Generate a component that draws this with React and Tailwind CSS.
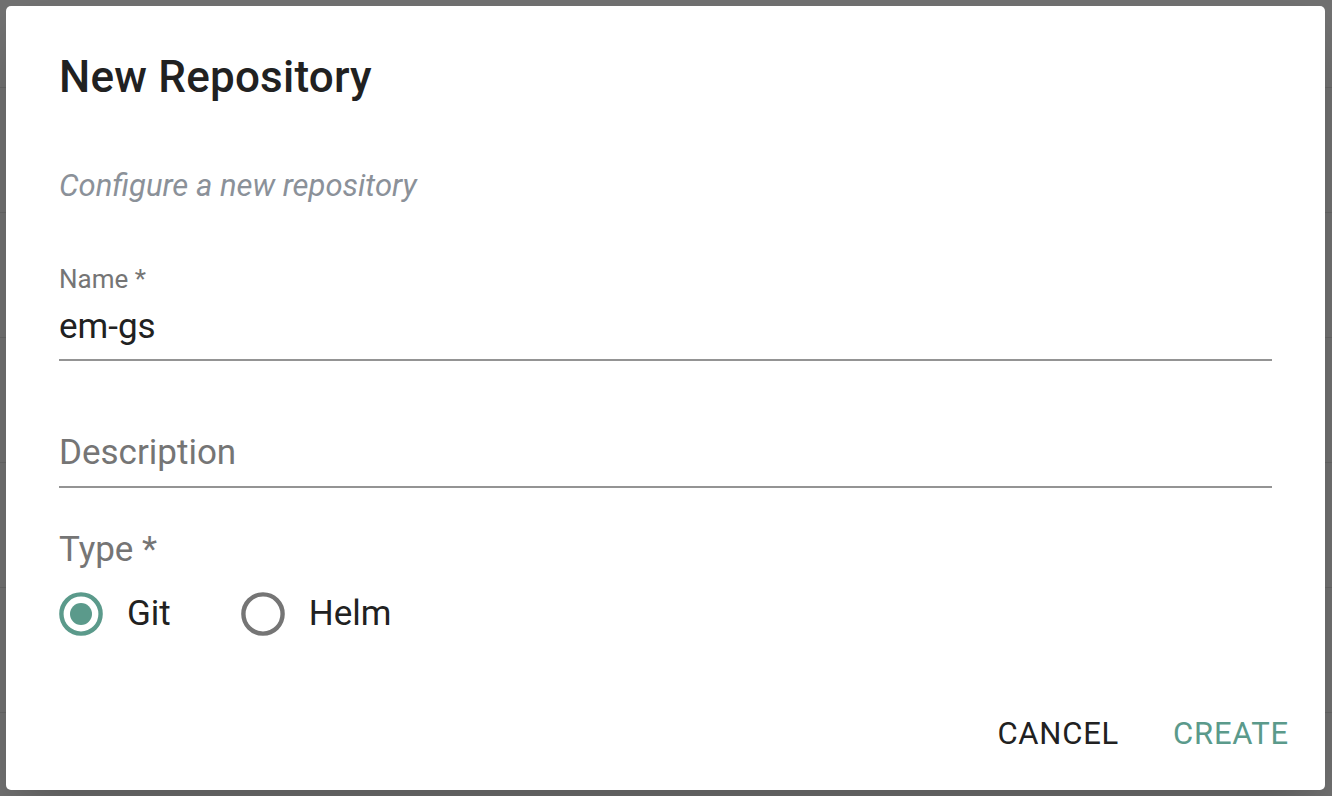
import React from 'react';

const rows = Array.from({ length: 7 });

const RadioIcon = ({ checked }) => (
  <svg width="44" height="44" viewBox="0 0 44 44" className="shrink-0">
    <circle
      cx="22"
      cy="22"
      r="19.6"
      fill="none"
      stroke={checked ? '#5b9a8b' : '#757575'}
      strokeWidth="4.4"
    />
    {checked && <circle cx="22" cy="22" r="11" fill="#5b9a8b" />}
  </svg>
);

const RadioOption = ({ label, checked }) => (
  <label className="flex items-center h-[44px]">
    <RadioIcon checked={checked} />
    <span className="ml-[24px] text-[35px] leading-[44px] text-[#212121]">{label}</span>
  </label>
);

export default function App() {
  return (
    <div className="relative w-[1332px] h-[796px] overflow-hidden bg-[#717171] font-['Roboto',sans-serif]">
      {/* table rows behind the backdrop */}
      <div>
        <div className="h-[88px] border-b border-[#666666]" />
        {rows.map((_, i) => (
          <div key={i} className="h-[125px] border-b border-[#666666]" />
        ))}
      </div>

      {/* dialog */}
      <div className="absolute left-[6px] top-[6px] w-[1319px] h-[784px] bg-white rounded-[5px] shadow-2xl flex flex-col px-[53px] pt-[46px]">
        <h2 className="h-[50px] text-[44px] leading-[50px] font-medium text-[#212121] tracking-[0.005em]">
          New Repository
        </h2>

        <p className="mt-[64px] h-[40px] text-[31px] leading-[40px] italic text-[#8b9199]">
          Configure a new repository
        </p>

        {/* Name */}
        <div className="mt-[58px] border-b-2 border-[#949494] pb-[12px]">
          <div className="h-[30px] text-[26px] leading-[30px] text-[#757575]">Name *</div>
          <div className="mt-[13px] h-[40px] text-[35px] leading-[40px] text-[#212121]">em-gs</div>
        </div>

        {/* Description */}
        <div className="mt-[72px] border-b-2 border-[#949494] pb-[13px]">
          <div className="h-[40px] text-[35px] leading-[40px] text-[#757575]">Description</div>
        </div>

        {/* Type */}
        <div className="mt-[42px] h-[40px] text-[35px] leading-[40px] text-[#757575]">Type *</div>
        <div className="mt-[22px] flex items-center gap-[70px]">
          <RadioOption label="Git" checked />
          <RadioOption label="Helm" />
        </div>

        {/* actions */}
        <div className="mt-auto mb-[36px] -mr-[17px] flex justify-end gap-[54px]">
          <button className="h-[40px] text-[31px] leading-[40px] tracking-[0.025em] text-[#212121] uppercase">
            Cancel
          </button>
          <button className="h-[40px] text-[31px] leading-[40px] tracking-[0.025em] text-[#5b9a8b] uppercase">
            Create
          </button>
        </div>
      </div>
    </div>
  );
}
